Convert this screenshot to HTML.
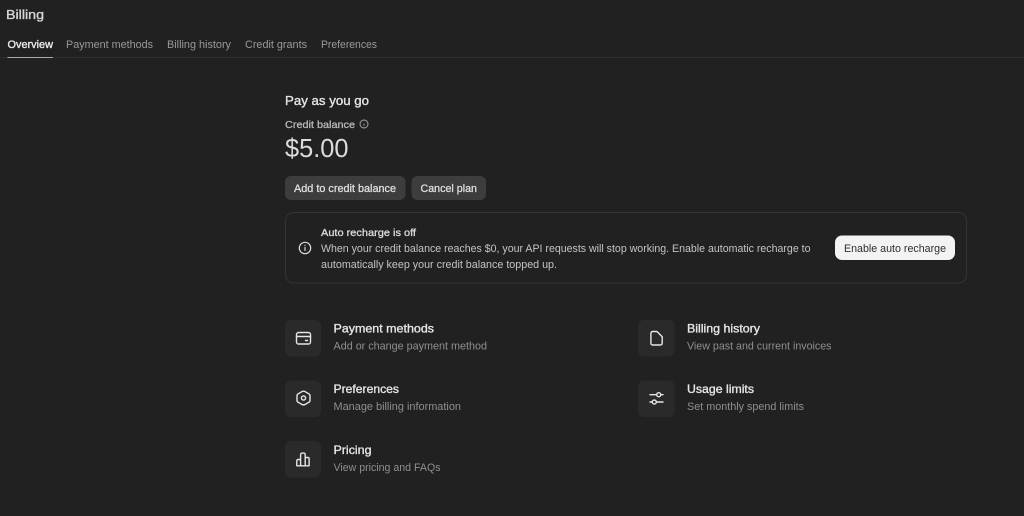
<!DOCTYPE html>
<html><head><meta charset="utf-8"><title>Billing</title>
<style>
html,body{margin:0;padding:0;background:#212121;width:1024px;height:516px;overflow:hidden}
svg{display:block;filter:blur(.3px)}
text{font-family:"Liberation Sans",sans-serif;font-size:11px}
.n{fill:#999;font-size:11px}
.m{stroke-width:.3px;paint-order:stroke}
.t{fill:#e6e6e6;stroke:#e6e6e6;stroke-width:.35px;font-size:12px}
.d{fill:#8f8f8f;font-size:11px}
.ic{fill:none;stroke:#e6e6e6;stroke-width:1.4;stroke-linecap:round;stroke-linejoin:round}
</style></head><body>
<svg width="1024" height="516" viewBox="0 0 1024 516" xmlns="http://www.w3.org/2000/svg">
<rect width="1024" height="516" fill="#212121"/>
<text x="6" y="19" textLength="38" lengthAdjust="spacingAndGlyphs" style="font-size:13px;fill:#d6d6d6;stroke:#d6d6d6;stroke-width:.35px">Billing</text>
<text x="7.500" y="48" textLength="45.500" lengthAdjust="spacingAndGlyphs" style="fill:#ececec;stroke:#ececec;stroke-width:.35px">Overview</text>
<text class="n" x="66" y="48" textLength="87" lengthAdjust="spacingAndGlyphs">Payment methods</text>
<text class="n" x="167" y="48" textLength="64" lengthAdjust="spacingAndGlyphs">Billing history</text>
<text class="n" x="245" y="48" textLength="62" lengthAdjust="spacingAndGlyphs">Credit grants</text>
<text class="n" x="321" y="48" textLength="56" lengthAdjust="spacingAndGlyphs">Preferences</text>
<rect x="0" y="57" width="1024" height="1" fill="#303030"/>
<rect x="7.500" y="57" width="45.500" height="1" fill="#aaa"/>

<text x="285" y="105" textLength="84" lengthAdjust="spacingAndGlyphs" style="font-size:13px;fill:#e6e6e6;stroke:#e6e6e6;stroke-width:.35px">Pay as you go</text>
<text x="285" y="128" textLength="70" lengthAdjust="spacingAndGlyphs" style="font-size:10.5px;fill:#b8b8b8;stroke:#b8b8b8;stroke-width:.3px">Credit balance</text>
<g fill="none" stroke="#aaa" stroke-width="0.9"><circle cx="364" cy="124" r="4"/><path d="M364 123.600v2.200M364 122.100v.2"/></g>
<text x="285" y="157" textLength="63.500" lengthAdjust="spacingAndGlyphs" style="font-size:26px;fill:#dcdcdc">$5.00</text>

<rect x="285" y="176" width="120.500" height="24" rx="6" fill="#3d3d3d"/>
<text x="294" y="192" textLength="102" lengthAdjust="spacingAndGlyphs" style="fill:#dedede;stroke:#dedede;stroke-width:.3px">Add to credit balance</text>
<rect x="411.500" y="176" width="74.500" height="24" rx="6" fill="#3d3d3d"/>
<text x="420.500" y="192" textLength="56.500" lengthAdjust="spacingAndGlyphs" style="fill:#dedede;stroke:#dedede;stroke-width:.3px">Cancel plan</text>

<rect x="285.500" y="212.500" width="681" height="70.500" rx="8" fill="none" stroke="#343434"/>
<g fill="none" stroke="#d8d8d8" stroke-width="1.2" stroke-linecap="round"><circle cx="305" cy="248" r="5.700"/><path d="M305 247.500v3M305 245.300v.2"/></g>
<text x="321" y="236" textLength="95" lengthAdjust="spacingAndGlyphs" style="font-size:10.5px;fill:#dcdcdc;stroke:#dcdcdc;stroke-width:.3px">Auto recharge is off</text>
<text x="321" y="252" textLength="489.500" lengthAdjust="spacingAndGlyphs" style="fill:#c4c4c4">When your credit balance reaches $0, your API requests will stop working. Enable automatic recharge to</text>
<text x="321" y="268" textLength="236" lengthAdjust="spacingAndGlyphs" style="fill:#c4c4c4">automatically keep your credit balance topped up.</text>
<rect x="835" y="235.500" width="120" height="24.500" rx="7" fill="#f3f3f3"/>
<text x="844" y="252" textLength="102" lengthAdjust="spacingAndGlyphs" style="fill:#2e2e2e">Enable auto recharge</text>

<g fill="#2a2a2b">
<rect x="285" y="320" width="36" height="36.500" rx="6"/>
<rect x="285" y="380.500" width="36" height="36.500" rx="6"/>
<rect x="285" y="441" width="36" height="36.500" rx="6"/>
<rect x="638" y="320" width="36.500" height="36.500" rx="6"/>
<rect x="638" y="380.500" width="36.500" height="36.500" rx="6"/>
</g>
<g class="ic">
<rect x="296.500" y="332.500" width="14" height="11.500" rx="2"/><path d="M296.500 336.500h14M305.500 340.500h2"/>
<path d="M301.800 391.700a3.400 3.400 0 0 1 3.400 0l3.600 2.100a2.400 2.400 0 0 1 1.200 2.100v4.300a2.400 2.400 0 0 1-1.200 2.100l-3.600 2.100a3.400 3.400 0 0 1-3.400 0l-3.600-2.100a2.400 2.400 0 0 1-1.200-2.100v-4.300a2.400 2.400 0 0 1 1.200-2.100z"/><circle cx="303.500" cy="398" r="2.100"/>
<path d="M296.800 465.800v-5a1.300 1.300 0 0 1 1.300-1.300h2.500v6.300zM300.600 465.800v-11.200a1.500 1.500 0 0 1 1.500-1.500h1.600a1.500 1.500 0 0 1 1.500 1.500v11.200zM305.200 465.800v-8.300h2.600a1.300 1.300 0 0 1 1.300 1.300v7z"/>
<path d="M652.700 331.500h4.300l5.200 5.200v6.500a1.800 1.800 0 0 1-1.800 1.800h-7.700a1.800 1.800 0 0 1-1.800-1.800v-9.900a1.800 1.800 0 0 1 1.800-1.800z"/>
<path d="M650 394.700h6.500M661 394.700h2M650 402h2M656.500 402h6.500"/><circle cx="658.700" cy="394.700" r="2"/><circle cx="654.300" cy="402" r="2"/>
</g>

<text class="t" x="333.500" y="332.500" textLength="100.500" lengthAdjust="spacingAndGlyphs">Payment methods</text>
<text class="d" x="333.500" y="349.500" textLength="153.500" lengthAdjust="spacingAndGlyphs">Add or change payment method</text>
<text class="t" x="333.500" y="393" textLength="65.500" lengthAdjust="spacingAndGlyphs">Preferences</text>
<text class="d" x="333.500" y="410" textLength="127.500" lengthAdjust="spacingAndGlyphs">Manage billing information</text>
<text class="t" x="333.500" y="454" textLength="38" lengthAdjust="spacingAndGlyphs">Pricing</text>
<text class="d" x="333.500" y="471" textLength="107" lengthAdjust="spacingAndGlyphs">View pricing and FAQs</text>
<text class="t" x="687" y="332.500" textLength="73" lengthAdjust="spacingAndGlyphs">Billing history</text>
<text class="d" x="687" y="349.500" textLength="144.500" lengthAdjust="spacingAndGlyphs">View past and current invoices</text>
<text class="t" x="687" y="393" textLength="67" lengthAdjust="spacingAndGlyphs">Usage limits</text>
<text class="d" x="687" y="410" textLength="117" lengthAdjust="spacingAndGlyphs">Set monthly spend limits</text>
</svg>
</body></html>
